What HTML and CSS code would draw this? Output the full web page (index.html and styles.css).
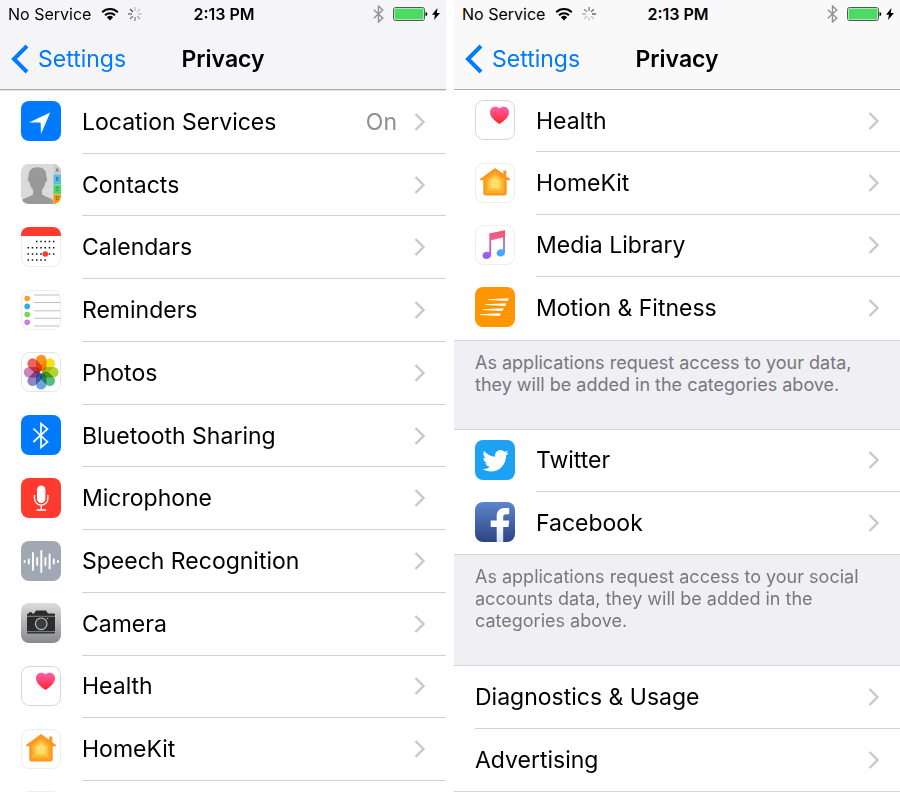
FILE: index.html
```html
<!DOCTYPE html>
<html lang="en">
<head>
    <meta charset="UTF-8">
    <meta name="viewport" content="width=device-width, initial-scale=1.0">
    <title>Privacy Settings</title>
    <link rel="stylesheet" href="styles.css">
</head>
<body>
    <!-- Shared icons -->
    <svg class="sprite" aria-hidden="true">
        <defs>
            <linearGradient id="gray-fill" x1="0" y1="0" x2="0" y2="1"><stop offset="0" stop-color="#dcdcde"/><stop offset="1" stop-color="#88898d"/></linearGradient>
            <linearGradient id="heart-fill" x1="0" y1="0" x2="0" y2="1"><stop offset="0" stop-color="#ff5fb0"/><stop offset="1" stop-color="#ff2524"/></linearGradient>
            <linearGradient id="fb-fill" x1="0" y1="0" x2="0" y2="1"><stop offset="0" stop-color="#5f85cf"/><stop offset="1" stop-color="#2b4583"/></linearGradient>
            <linearGradient id="f-fill" x1="0" y1="0" x2="0" y2="1"><stop offset="0.5" stop-color="#fff"/><stop offset="1" stop-color="#d5def2"/></linearGradient>
            <linearGradient id="music-fill" gradientUnits="userSpaceOnUse" x1="20" y1="5" x2="20" y2="34"><stop offset="0" stop-color="#fb5064"/><stop offset="0.35" stop-color="#e765a0"/><stop offset="1" stop-color="#8a5cff"/></linearGradient>
            <linearGradient id="music-right" gradientUnits="userSpaceOnUse" x1="28" y1="5" x2="28" y2="31"><stop offset="0.1" stop-color="#fb5064"/><stop offset="0.5" stop-color="#a784d8"/><stop offset="0.9" stop-color="#3fa9ff"/></linearGradient>
        </defs>
        <symbol id="wifi" viewBox="0 0 18 14">
            <g fill="none" stroke="#000" stroke-width="2"><path d="M1.2 5.2a11.2 11.2 0 0 1 15.6 0"/><path d="M4 8.3a7.2 7.2 0 0 1 10 0"/></g>
            <path d="M9 13.6 5.9 10.3a4.5 4.5 0 0 1 6.2 0z"/>
        </symbol>
        <symbol id="spinner" viewBox="0 0 14 14">
            <g stroke="#000" stroke-width="1.2">
                <path d="M7 0v4" opacity=".25"/><path d="m12 2-2.9 2.9" opacity=".2"/><path d="M14 7h-4" opacity=".25"/><path d="M12 12 9.1 9.1" opacity=".35"/>
                <path d="M7 14v-4" opacity=".5"/><path d="m2 12 2.9-2.9" opacity=".55"/><path d="M0 7h4" opacity=".65"/><path d="m2 2 2.9 2.9" opacity=".75"/>
            </g>
        </symbol>
        <symbol id="bt" viewBox="0 0 11 18"><path d="m.8 4.800 9 8.200L5.500 17V1l4.300 4-9 8.200" fill="none" stroke="#929296" stroke-width="1.400"/></symbol>
        <symbol id="battery" viewBox="0 0 36 14">
            <rect x=".5" y=".5" width="31" height="13" rx="2" fill="#fff" stroke="#55555a"/>
            <rect x="1.500" y="1.500" width="29" height="11" rx="1" fill="#4cd964"/>
            <path d="M32.500 5c2.400 0 2.400 4 0 4z"/>
        </symbol>
        <symbol id="bolt" viewBox="0 0 8 12"><path d="M5.500 0 0 6.800h3L2 12l6-7H4.800z"/></symbol>
        <symbol id="back" viewBox="0 0 19 30"><path d="M17 2 4 15l13 13" fill="none" stroke="#007aff" stroke-width="4"/></symbol>
        <symbol id="chevron" viewBox="0 0 12 20"><path d="m1.500 2 8 8-8 8" fill="none" stroke="#c7c7cc" stroke-width="2.400"/></symbol>

        <symbol id="location" viewBox="0 0 40 40">
            <rect width="40" height="40" rx="8" fill="#007aff"/>
            <path d="m8 21.500 21.200-10L20 33l-.4-11.500z" fill="#fff"/>
        </symbol>
        <symbol id="calendar" viewBox="0 0 40 40">
            <rect x=".5" y=".5" width="39" height="39" rx="8" fill="#fff" stroke="#ededed"/>
            <path d="M0 9V8a8 8 0 0 1 8-8h24a8 8 0 0 1 8 8v1z" fill="#ff3b30"/>
            <g stroke="#111" stroke-width="1.500" stroke-dasharray="1.500 2.740"><path d="M15 14.500h19M6.500 20.700h27.500M6.500 27h27.500M6.500 33h19"/></g>
            <circle cx="24.300" cy="27" r="2.800" fill="#ff3b30"/>
        </symbol>
        <symbol id="reminders" viewBox="0 0 40 40">
            <rect x=".5" y=".5" width="39" height="39" rx="8" fill="#fff" stroke="#ededed"/>
            <path d="M13 5h25M13 12.500h26.500M13 20.800h26.500M13 28.300h26.500M13 36h25" stroke="#b8b8bb" stroke-width=".9"/>
            <circle cx="6.200" cy="8.500" r="2.800" fill="#ff9d1e"/><circle cx="6.200" cy="16.400" r="2.800" fill="#2eaaf5"/>
            <circle cx="6.200" cy="24.600" r="2.800" fill="#6fdb4c"/><circle cx="6.200" cy="32.300" r="2.800" fill="#cb7be0"/>
        </symbol>
        <symbol id="photos" viewBox="0 0 40 40">
            <rect x=".5" y=".5" width="39" height="39" rx="8" fill="#fff" stroke="#e6e6e6"/>
            <g class="petals">
                <rect x="15" y="2.800" width="10.400" height="16.400" rx="5.200" fill="#f7941d"/>
                <rect x="15" y="2.800" width="10.400" height="16.400" rx="5.200" fill="#f5e11b" transform="rotate(45 20.200 20.200)"/>
                <rect x="15" y="2.800" width="10.400" height="16.400" rx="5.200" fill="#b3d334" transform="rotate(90 20.200 20.200)"/>
                <rect x="15" y="2.800" width="10.400" height="16.400" rx="5.200" fill="#58bb82" transform="rotate(135 20.200 20.200)"/>
                <rect x="15" y="2.800" width="10.400" height="16.400" rx="5.200" fill="#6ba7dc" transform="rotate(180 20.200 20.200)"/>
                <rect x="15" y="2.800" width="10.400" height="16.400" rx="5.200" fill="#9086c4" transform="rotate(225 20.200 20.200)"/>
                <rect x="15" y="2.800" width="10.400" height="16.400" rx="5.200" fill="#cf83b6" transform="rotate(270 20.200 20.200)"/>
                <rect x="15" y="2.800" width="10.400" height="16.400" rx="5.200" fill="#f16358" transform="rotate(315 20.200 20.200)"/>
            </g>
        </symbol>
        <symbol id="bluetooth" viewBox="0 0 40 40">
            <rect width="40" height="40" rx="8" fill="#007aff"/>
            <path d="M12.300 13.500 26.500 27 20 32.500v-24l6.500 5.500-14.200 13" fill="none" stroke="#fff" stroke-width="1.700"/>
        </symbol>
        <symbol id="microphone" viewBox="0 0 40 40">
            <rect width="40" height="40" rx="8" fill="#ff3b30"/>
            <rect x="16" y="7.500" width="8.400" height="17.500" rx="4.200" fill="#fff"/>
            <path d="M13.500 17v3.500a6.700 6.700 0 0 0 13.400 0V17M20.200 27.500V32M15.500 32h9.500" fill="none" stroke="#fff" stroke-width="1.300"/>
        </symbol>
        <symbol id="speech" viewBox="0 0 40 40">
            <rect width="40" height="40" rx="8" fill="#a2a8b3"/>
            <path d="M3.600 20v1M7.800 18.500v4M12 12v17M16.200 17v7M20.300 10v21M24.400 17v7M28.600 13.500v14M32.800 18.500v4M37 20v1" stroke="#fff" stroke-width="1.900" stroke-linecap="round"/>
        </symbol>
        <symbol id="camera" viewBox="0 0 40 40">
            <rect width="40" height="40" rx="8" fill="url(#gray-fill)"/>
            <path d="M7 10.500h1V9.300h3v1.200h2l2-3h10l2 3h6a1 1 0 0 1 1 1v18a1 1 0 0 1-1 1H7a1 1 0 0 1-1-1v-18a1 1 0 0 1 1-1z" fill="#2c2c2e"/>
            <path d="M6 13.300h28M6 28.600h28" stroke="#aaabad" stroke-width=".7"/>
            <circle cx="20.200" cy="20.800" r="7" fill="#2c2c2e"/>
            <circle cx="20.200" cy="20.800" r="5.800" fill="#3c3d3e" stroke="#bbbcbe" stroke-width="1.200"/>
            <circle cx="26.500" cy="15.500" r=".8" fill="#ff9500"/>
        </symbol>
        <symbol id="health" viewBox="0 0 40 40">
            <rect x=".5" y=".5" width="39" height="39" rx="8" fill="#fff" stroke="#d5d5d5"/>
            <path d="M24.500 24C21 21.500 15 17.500 15 12.200c0-6 7-7 9.500-3.700 2.500-3.300 9.500-2.300 9.500 3.700 0 5.300-6 9.300-9.500 11.800z" fill="url(#heart-fill)"/>
        </symbol>
        <symbol id="homekit" viewBox="0 0 40 40">
            <rect x=".5" y=".5" width="39" height="39" rx="8" fill="#fff" stroke="#ededed"/>
            <path d="M20 5 4.700 16.300l.7 1H8.300V30.500a2 2 0 0 0 2 2h19.400a2 2 0 0 0 2-2V17.300h3.100l.6-1-4.100-3.100V7.500h-3v3.300z" fill="#fb9820"/>
            <path d="M20 9.300 10.700 16.300V30h18.600V16.300z" fill="#ffad27"/>
            <path d="m20 11.500-7 5.500v10.500h14V17z" fill="#ffc342"/>
            <path d="m20 14.500-4.500 3.500v7h9v-7z" fill="#ffdf70"/>
        </symbol>
        <symbol id="music" viewBox="0 0 40 40">
            <rect x=".5" y=".5" width="39" height="39" rx="8" fill="#fff" stroke="#ededed"/>
            <path d="M14.300 8.500 30 5.300V12l-13.800 3.200v14.600c0 2.300-2 4.200-4.700 4.200-2.400 0-4-1.400-4-3.300 0-2.300 2-3.900 4.600-3.900.8 0 1.500.1 2.200.5z" fill="url(#music-fill)"/>
            <path d="M28 6 30 5.300v22c0 2.400-2 4.200-4.500 4.200-2.300 0-3.900-1.400-3.900-3.300 0-2.200 2-3.900 4.400-3.900.7 0 1.400.1 2 .4z" fill="url(#music-right)"/>
        </symbol>
        <symbol id="motion" viewBox="0 0 40 40">
            <rect width="40" height="40" rx="8" fill="#ff9500"/>
            <path d="m13 12.300 20.700-1-.8 2.700-19.900-1zM10.400 17.300l20.700-1-.8 2.700-19.900-1zM7.800 22.300l20.700-1-.8 2.700-19.900-1zM5 27.300l20.700-1-.8 2.700-19.900-1z" fill="#fff"/>
        </symbol>
        <symbol id="twitter" viewBox="0 0 40 40">
            <rect width="40" height="40" rx="8" fill="#1da1f2"/>
            <path transform="translate(7.300 7.600) scale(1.100)" fill="#fff" d="M23.953 4.570a10 10 0 0 1-2.825.775 4.958 4.958 0 0 0 2.163-2.723c-.951.555-2.005.959-3.127 1.184a4.920 4.920 0 0 0-8.384 4.482C7.690 8.095 4.067 6.130 1.640 3.162a4.822 4.822 0 0 0-.666 2.475c0 1.710.870 3.213 2.188 4.096a4.904 4.904 0 0 1-2.228-.616v.060a4.923 4.923 0 0 0 3.946 4.827 4.996 4.996 0 0 1-2.212.085 4.936 4.936 0 0 0 4.604 3.417 9.867 9.867 0 0 1-6.102 2.105c-.390 0-.779-.023-1.170-.067a13.995 13.995 0 0 0 7.557 2.209c9.053 0 13.998-7.496 13.998-13.985 0-.210 0-.420-.015-.630A9.935 9.935 0 0 0 24 4.590z"/>
        </symbol>
        <symbol id="facebook" viewBox="0 0 40 40">
            <rect width="40" height="40" rx="8" fill="url(#fb-fill)"/>
            <path d="M21.700 40V25h-6v-6.500h6v-4c0-5.500 3-8.500 8-8.500h4.500v6.200h-3c-2 0-3 .8-3 2.800v3.500h6L33.500 25h-5.300v15z" fill="url(#f-fill)"/>
        </symbol>
    </svg>

    <main class="screens">
        <section class="screen">
            <header class="header header-tinted">
                <div class="status">
                    <div class="status-left">
                        <span>No Service</span>
                        <svg class="wifi"><use href="#wifi"/></svg>
                        <svg class="spinner"><use href="#spinner"/></svg>
                    </div>
                    <span class="time">2:13 PM</span>
                    <div class="status-right">
                        <svg class="bt"><use href="#bt"/></svg>
                        <svg class="battery"><use href="#battery"/></svg>
                        <svg class="bolt"><use href="#bolt"/></svg>
                    </div>
                </div>
                <nav class="nav">
                    <a class="back" href="#"><svg><use href="#back"/></svg>Settings</a>
                    <h1>Privacy</h1>
                </nav>
            </header>
            <div class="group group-11">
                <a class="row" href="#"><svg class="icon"><use href="#location"/></svg><span class="cell">Location Services <span class="value">On</span><svg class="chevron"><use href="#chevron"/></svg></span></a>
                <a class="row" href="#">
                    <svg class="icon contacts" viewBox="0 0 40 40" aria-hidden="true">
                        <path d="M0 0h40v40H0z" fill="#dadada"/>
                        <path d="M0 40v-3c2-2.500 8-4 12-6.500v-5c-2-2-3-4-3.400-7-2-1-2.200-5-.9-6C7.300 6 11 3.300 16.500 3.300S25.700 6 25.300 12.500c1.300 1 1.100 5-.9 6-.4 3-1.400 5-3.400 7v5c4 2.500 9 3.500 11 5.500v4z" fill="#999"/>
                        <path d="M32.500 0H40v10h-7.500z" fill="#d0cdc8"/><path d="M32.500 10.500H40V20h-7.500z" fill="#55bef0"/>
                        <path d="M32.500 20.500H40V30h-7.500z" fill="#4cd964"/><path d="M32.500 30.500H40V40h-7.500z" fill="#ff9500"/>
                        <text x="34.500" y="7.500">A</text><text x="34.500" y="17">B</text><text x="34.500" y="27">C</text><text x="34.500" y="36">D</text>
                    </svg>
                    <span class="cell">Contacts<svg class="chevron"><use href="#chevron"/></svg></span>
                </a>
                <a class="row" href="#"><svg class="icon"><use href="#calendar"/></svg><span class="cell">Calendars<svg class="chevron"><use href="#chevron"/></svg></span></a>
                <a class="row" href="#"><svg class="icon"><use href="#reminders"/></svg><span class="cell">Reminders<svg class="chevron"><use href="#chevron"/></svg></span></a>
                <a class="row" href="#"><svg class="icon"><use href="#photos"/></svg><span class="cell">Photos<svg class="chevron"><use href="#chevron"/></svg></span></a>
                <a class="row" href="#"><svg class="icon"><use href="#bluetooth"/></svg><span class="cell">Bluetooth Sharing<svg class="chevron"><use href="#chevron"/></svg></span></a>
                <a class="row" href="#"><svg class="icon"><use href="#microphone"/></svg><span class="cell">Microphone<svg class="chevron"><use href="#chevron"/></svg></span></a>
                <a class="row" href="#"><svg class="icon"><use href="#speech"/></svg><span class="cell">Speech Recognition<svg class="chevron"><use href="#chevron"/></svg></span></a>
                <a class="row" href="#"><svg class="icon"><use href="#camera"/></svg><span class="cell">Camera<svg class="chevron"><use href="#chevron"/></svg></span></a>
                <a class="row" href="#"><svg class="icon"><use href="#health"/></svg><span class="cell">Health<svg class="chevron"><use href="#chevron"/></svg></span></a>
                <a class="row" href="#"><svg class="icon"><use href="#homekit"/></svg><span class="cell">HomeKit<svg class="chevron"><use href="#chevron"/></svg></span></a>
            </div>
            <!-- top edge of the next row -->
            <div class="peek"><svg class="icon"><use href="#music"/></svg></div>
        </section>

        <section class="screen">
            <header class="header">
                <div class="status">
                    <div class="status-left">
                        <span>No Service</span>
                        <svg class="wifi"><use href="#wifi"/></svg>
                        <svg class="spinner spinner-turned"><use href="#spinner"/></svg>
                    </div>
                    <span class="time">2:13 PM</span>
                    <div class="status-right">
                        <svg class="bt"><use href="#bt"/></svg>
                        <svg class="battery"><use href="#battery"/></svg>
                        <svg class="bolt"><use href="#bolt"/></svg>
                    </div>
                </div>
                <nav class="nav">
                    <a class="back" href="#"><svg><use href="#back"/></svg>Settings</a>
                    <h1>Privacy</h1>
                </nav>
            </header>
            <div class="group group-4 closed">
                <a class="row" href="#"><svg class="icon"><use href="#health"/></svg><span class="cell">Health<svg class="chevron"><use href="#chevron"/></svg></span></a>
                <a class="row" href="#"><svg class="icon"><use href="#homekit"/></svg><span class="cell">HomeKit<svg class="chevron"><use href="#chevron"/></svg></span></a>
                <a class="row" href="#"><svg class="icon"><use href="#music"/></svg><span class="cell">Media Library<svg class="chevron"><use href="#chevron"/></svg></span></a>
                <a class="row" href="#"><svg class="icon"><use href="#motion"/></svg><span class="cell">Motion &amp; Fitness<svg class="chevron"><use href="#chevron"/></svg></span></a>
            </div>
            <p class="note">As applications request access to your data, they will be added in the categories above.</p>
            <div class="group group-2 closed">
                <a class="row" href="#"><svg class="icon"><use href="#twitter"/></svg><span class="cell">Twitter<svg class="chevron"><use href="#chevron"/></svg></span></a>
                <a class="row" href="#"><svg class="icon"><use href="#facebook"/></svg><span class="cell">Facebook<svg class="chevron"><use href="#chevron"/></svg></span></a>
            </div>
            <p class="note">As applications request access to your social accounts data, they will be added in the categories above.</p>
            <div class="group group-2 closed">
                <a class="row" href="#"><span class="cell">Diagnostics &amp; Usage<svg class="chevron"><use href="#chevron"/></svg></span></a>
                <a class="row" href="#"><span class="cell">Advertising<svg class="chevron"><use href="#chevron"/></svg></span></a>
            </div>
        </section>
    </main>
</body>
</html>
```

FILE: styles.css
```css
* {
    box-sizing: border-box;
}

body {
    margin: 0;
    background-color: #fff;
    color: #000;
    font-family: Inter, "Liberation Sans", sans-serif;
    font-size: 23px;
}

.sprite {
    position: absolute;
    width: 0;
    height: 0;
}

.screens {
    display: grid;
    grid-template-columns: 1fr 1fr;
    gap: 8px;
    min-height: 100vh;
}

.screen {
    display: flex;
    flex-direction: column;
    min-width: 0;
}

/* Header */
.header {
    background-color: #f9f9f9;
    border-bottom: 1px solid #acacae;
}

.header-tinted {
    background-color: #f5f5f8;
    box-shadow: 0 1px 0 #e2e2e7;
    margin-bottom: 1px;
}

.status {
    display: grid;
    grid-template-columns: 1fr auto 1fr;
    align-items: center;
    height: 28px;
    padding: 0 6px 0 8px;
    font-size: 16px;
}

.status-left,
.status-right {
    display: flex;
    align-items: center;
}

.status-right {
    justify-content: flex-end;
}

.time {
    font-weight: 600;
}

.wifi {
    width: 18px;
    height: 14px;
    margin: 0 9px 0 10px;
}

.spinner {
    width: 14px;
    height: 14px;
}

.spinner-turned {
    transform: rotate(135deg);
}

.bt {
    width: 11px;
    height: 18px;
    margin-right: 9px;
}

.battery {
    width: 36px;
    height: 14px;
    margin-right: 3px;
}

.bolt {
    width: 8px;
    height: 12px;
}

.nav {
    display: grid;
    grid-template-columns: 1fr auto 1fr;
    align-items: center;
    height: 61px;
    padding: 0 10px;
}

.back {
    display: flex;
    align-items: center;
    gap: 9px;
    color: #007aff;
    text-decoration: none;
}

.back svg {
    width: 19px;
    height: 30px;
}

h1 {
    margin: 0;
    font-size: 23px;
    font-weight: 600;
}

/* Lists */
.group {
    display: flex;
    flex-direction: column;
    padding-left: 21px;
}

.group-11 {
    flex: 11 0 0;
}

.group-4 {
    flex: 4 0 0;
}

.group-2 {
    flex: 2 0 0;
}

.row {
    display: flex;
    flex: 1;
    align-items: center;
    gap: 21px;
    min-height: 60px;
    color: inherit;
    text-decoration: none;
}

.icon {
    flex: none;
    width: 40px;
    height: 40px;
    margin-bottom: 2px;
}

.cell {
    display: flex;
    flex: 1;
    align-items: center;
    align-self: stretch;
    padding-right: 20px;
    border-bottom: 1px solid #d3d3d6;
}

.closed .row:last-child .cell {
    border-bottom: none;
}

.closed {
    border-bottom: 1px solid #d3d3d8;
}

.value {
    margin-left: auto;
    color: #8e8e93;
}

.chevron {
    width: 12px;
    height: 20px;
    margin-left: auto;
}

.value + .chevron {
    margin-left: 17px;
}

.peek {
    height: 11px;
    padding: 10px 0 0 21px;
    overflow: hidden;
}

.note {
    margin: 0;
    padding: 11px 20px 33px 21px;
    background-color: #efeff4;
    border-bottom: 1px solid #d3d3d8;
    color: #77777c;
    font-size: 18px;
    line-height: 22px;
}

/* Icon details */
.contacts {
    border-radius: 8px;
}

.contacts text {
    fill: #555;
    font-size: 5px;
}

.petals rect {
    mix-blend-mode: multiply;
}
```
